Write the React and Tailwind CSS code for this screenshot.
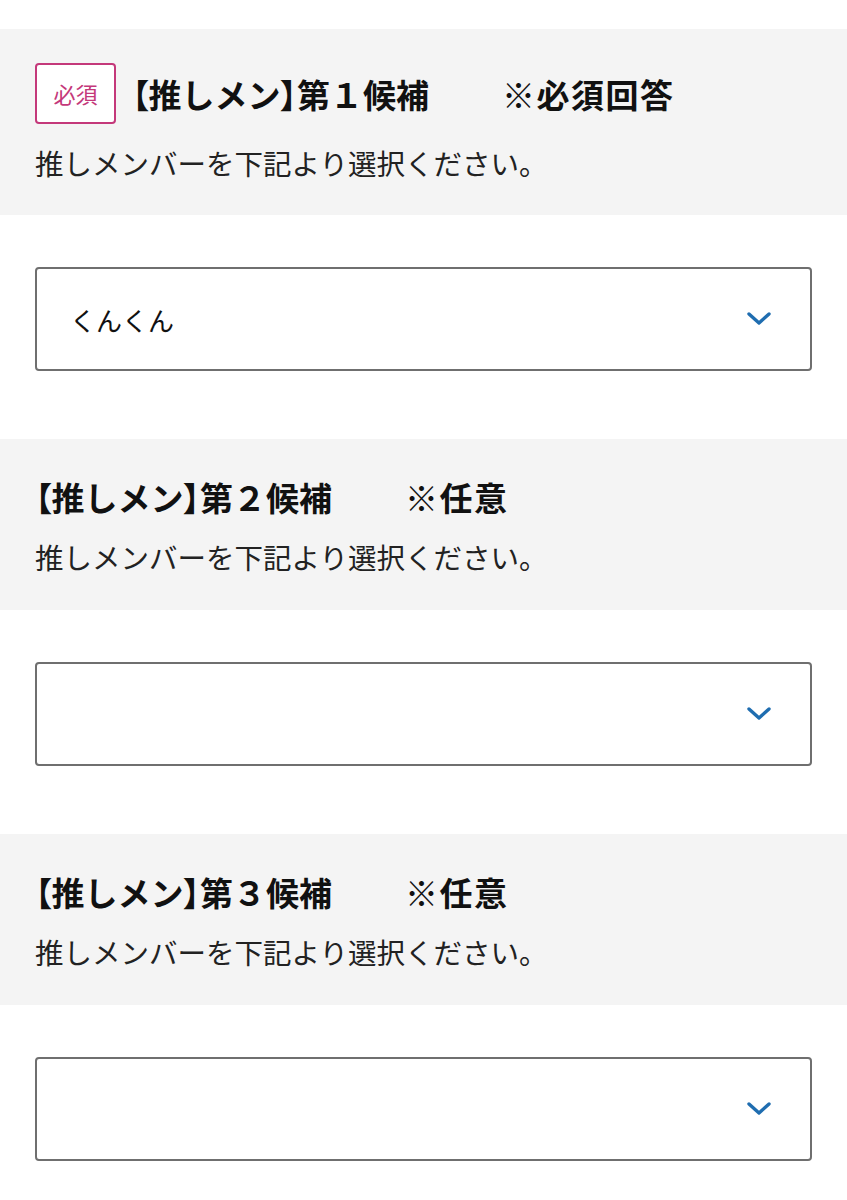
import React from "react";

const jp = { fontFamily: '"Noto Sans CJK JP", "Noto Sans", sans-serif' };

const Chevron = () => (
  <svg width="24" height="14" viewBox="0 0 24 14" fill="none">
    <polyline
      points="2,2 12,11 22,2"
      stroke="#1f6db0"
      strokeWidth="3.4"
      strokeLinecap="round"
      strokeLinejoin="round"
    />
  </svg>
);

const SelectBox = ({ value }) => (
  <div className="mx-[35px] flex h-[104px] items-center justify-between rounded-[4px] border-2 border-[#6f6f6f] bg-white pl-[33px] pr-[39px]">
    <span className="text-[26px] text-[#111]">{value}</span>
    <Chevron />
  </div>
);

const Question = ({ num, note, required, value }) => (
  <div>
    <div
      className={`bg-[#f4f4f4] px-[35px] ${
        required ? "pt-[34px] pb-[32px]" : "pt-[38px] pb-[33px]"
      }`}
    >
      <div className="flex items-center">
        {required && (
          <div className="mr-[16px] flex h-[61px] w-[81px] items-center justify-center rounded-[4px] border-2 border-[#c4387a] bg-white text-[22px] text-[#c4387a]">
            必須
          </div>
        )}
        <span className="text-[33px] font-bold leading-[40px] text-[#111]">
          <span className="[font-feature-settings:'palt']">【</span>推しメン
          <span className="[font-feature-settings:'palt']">】</span>第{num}候補
        </span>
        <span className="ml-[73px] text-[33px] font-bold leading-[40px] tracking-[1.5px] text-[#111]">
          {note}
        </span>
      </div>
      <p
        className={`text-[28.5px] leading-[40px] text-[#222] ${
          required ? "mt-[19px]" : "mt-[20px]"
        }`}
      >
        推しメンバーを下記より選択ください。
      </p>
    </div>
    <div className="pt-[52px] pb-[68px]">
      <SelectBox value={value} />
    </div>
  </div>
);

export default function App() {
  return (
    <div style={jp} className="min-h-[1200px] w-[847px] bg-white pt-[29px]">
      <Question num="１" note="※必須回答" required value="くんくん" />
      <Question num="２" note="※任意" value="" />
      <Question num="３" note="※任意" value="" />
    </div>
  );
}
